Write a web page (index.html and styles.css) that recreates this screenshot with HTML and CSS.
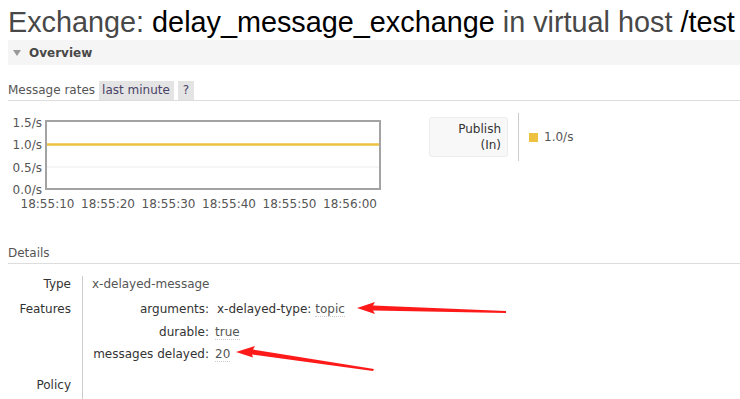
FILE: index.html
```html
<!DOCTYPE html>
<html>
<head>
<meta charset="utf-8">
<link rel="stylesheet" href="styles.css">
</head>
<body>
<h1 class="title"><span class="dim">Exchange:</span> <span class="strong">delay_message_exchange</span> <span class="dim">in virtual host</span> <span class="strong">/test</span></h1>

<div class="section-head"><span class="tri"></span><span class="section-title">Overview</span></div>

<div class="rates-head">
  <span class="rates-label">Message rates</span>
  <span class="btn">last minute</span>
  <span class="btn q">?</span>
</div>

<div class="chart-row">
  <svg class="chart" width="400" height="100" viewBox="0 113 400 100">
    <g class="ylab">
      <text x="42" y="126.5">1.5/s</text>
      <text x="42" y="149">1.0/s</text>
      <text x="42" y="171.5">0.5/s</text>
      <text x="42" y="193.5">0.0/s</text>
    </g>
    <line x1="47" y1="167" x2="380" y2="167" class="grid"/>
    <line x1="47" y1="144.5" x2="380" y2="144.5" class="series"/>
    <rect x="46" y="121" width="334" height="68" class="frame"/>
    <g class="xlab">
      <text x="47.5" y="207.5">18:55:10</text>
      <text x="108" y="207.5">18:55:20</text>
      <text x="168.5" y="207.5">18:55:30</text>
      <text x="229" y="207.5">18:55:40</text>
      <text x="289.5" y="207.5">18:55:50</text>
      <text x="350" y="207.5">18:56:00</text>
    </g>
  </svg>
  <div class="legend">
    <div class="legend-key">Publish<br>(In)</div>
    <div class="legend-val"><span class="swatch"></span>1.0/s</div>
  </div>
</div>

<div class="details-head">Details</div>

<div class="facts">
  <div class="fact-key first">Type</div>
  <div class="fact-val first">x-delayed-message</div>
  <div class="fact-key">Features</div>
  <div class="fact-val">
    <div class="mini">
      <div class="mini-key">arguments:</div>
      <div class="mini-val args"><span class="k">x-delayed-type:</span> <span class="v">topic</span></div>
      <div class="mini-key">durable:</div>
      <div class="mini-val"><span class="v">true</span></div>
      <div class="mini-key">messages delayed:</div>
      <div class="mini-val"><span class="v">20</span></div>
    </div>
  </div>
  <div class="fact-key policy">Policy</div>
  <div class="fact-val policy"></div>
</div>

<svg class="arrows" width="740" height="399" viewBox="0 0 740 399">
  <polygon class="arrow" points="506,311 373,305.5 375,302 357,308 375,314 373,310.5 506,313"/>
  <polygon class="arrow" points="374,369 253,349.5 255,346 236,352 253,357.5 252,354.5 373,371"/>
</svg>
</body>
</html>
```
FILE: styles.css
```css
html, body {
  margin: 0;
  padding: 0;
  background: #fff;
}
body {
  padding-left: 8px;
  font-family: "DejaVu Sans", Verdana, sans-serif;
  font-size: 12px;
  color: #444;
  position: relative;
  height: 399px;
  overflow: hidden;
}
.title {
  margin: 0;
  padding-top: 4px;
  height: 36px;
  font-family: "Liberation Sans", Arial, sans-serif;
  font-weight: normal;
  font-size: 28.8px;
  line-height: 36px;
  color: #484848;
  white-space: nowrap;
}
.title .strong { color: #000; }
.section-head {
  display: flex;
  align-items: center;
  height: 25px;
  background: #f5f5f5;
}
.tri {
  width: 0;
  height: 0;
  margin-left: 5px;
  margin-right: 8px;
  border-left: 4.5px solid transparent;
  border-right: 4.5px solid transparent;
  border-top: 6px solid #999;
}
.section-title {
  font-weight: bold;
  color: #484848;
}
.rates-head {
  margin-top: 16px;
  display: flex;
  align-items: stretch;
  height: 19px;
  border-bottom: 1px solid #ddd;
  line-height: 19px;
  color: #555;
}
.rates-label { margin-right: 4px; }
.btn {
  background: #e4e4e4;
  padding: 0 4px 0 3px;
  margin-right: 4px;
  color: #4a4266;
}
.btn.q { padding: 0 5px; }
.chart-row {
  display: flex;
  margin-left: -8px;
  margin-top: 12px;
  height: 100px;
}
.chart { display: block; }
.chart text {
  font-family: "DejaVu Sans", Verdana, sans-serif;
  font-size: 12px;
  fill: #555;
}
.ylab text { text-anchor: end; }
.xlab text { text-anchor: middle; }
.frame { fill: none; stroke: #a3a3a3; stroke-width: 2; }
.grid { stroke: #ececec; stroke-width: 1; }
.series { stroke: #edc240; stroke-width: 2.5; }
.legend {
  display: flex;
  align-items: flex-start;
  margin-left: 29px;
}
.legend-key {
  margin-top: 4px;
  width: 71px;
  padding-right: 6px;
  padding-top: 3px;
  height: 35px;
  background: #f8f8f8;
  border: 1px solid #ececec;
  border-radius: 3px;
  text-align: right;
  line-height: 16px;
  color: #333;
}
.legend-val {
  margin-left: 10px;
  height: 48px;
  border-left: 1px solid #ccc;
  padding-left: 10px;
  display: flex;
  align-items: center;
  color: #555;
}
.swatch {
  width: 9px;
  height: 9px;
  background: #edc240;
  margin-right: 6px;
}
.details-head {
  margin-top: 31px;
  height: 19px;
  line-height: 18px;
  border-bottom: 1px solid #ddd;
  color: #555;
}
.facts {
  display: grid;
  grid-template-columns: 75px auto;
  margin-top: 12px;
  line-height: 22px;
}
.fact-key {
  text-align: right;
  padding-right: 11px;
  border-right: 1px solid #ccc;
  color: #333;
}
.fact-val {
  padding-left: 9px;
  color: #555;
}
.fact-key.first, .fact-val.first {
  line-height: 16px;
  height: 22px;
}
.fact-key.policy, .fact-val.policy {
  height: 40px;
  padding-top: 8px;
}
.mini {
  display: grid;
  grid-template-columns: 117px auto;
  column-gap: 6px;
}
.mini-key {
  text-align: right;
  color: #333;
  line-height: 22.5px;
}
.mini-val {
  color: #333;
  line-height: 22.5px;
}
.mini-val.args { padding-left: 2px; }
.v {
  color: #555;
  border-bottom: 1px dotted #ccc;
}
.arrows {
  position: absolute;
  left: 0;
  top: 0;
  pointer-events: none;
}
.arrow { fill: #ff1a1a; }
```
